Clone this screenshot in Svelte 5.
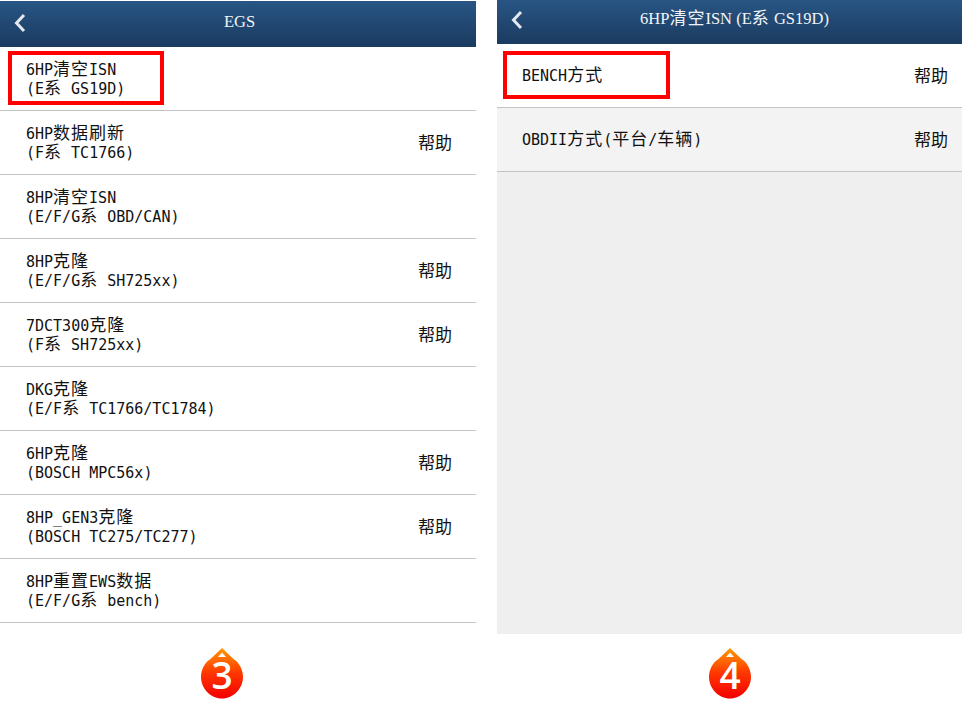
<script>
  const left = [
    { a: '6HP清空ISN', b: '(E系 GS19D)' },
    { a: '6HP数据刷新', b: '(F系 TC1766)', help: true },
    { a: '8HP清空ISN', b: '(E/F/G系 OBD/CAN)' },
    { a: '8HP克隆', b: '(E/F/G系 SH725xx)', help: true },
    { a: '7DCT300克隆', b: '(F系 SH725xx)', help: true },
    { a: 'DKG克隆', b: '(E/F系 TC1766/TC1784)' },
    { a: '6HP克隆', b: '(BOSCH MPC56x)', help: true },
    { a: '8HP_GEN3克隆', b: '(BOSCH TC275/TC277)', help: true },
    { a: '8HP重置EWS数据', b: '(E/F/G系 bench)' }
  ];
  const right = [
    { a: 'BENCH方式', help: true },
    { a: 'OBDII方式(平台/车辆)', help: true }
  ];

  // split into latin / chinese runs, the chinese ones get their own size
  const runs = (text) => text.split(/([\u4e00-\u9fff]+)/).filter(Boolean);
  const isCjk = (run) => /[\u4e00-\u9fff]/.test(run);
</script>

{#snippet mixed(text)}
  {#each runs(text) as run}{#if isCjk(run)}<span class="cjk">{run}</span>{:else}{run}{/if}{/each}
{/snippet}

{#snippet back()}
  <svg class="back" width="14" height="20" viewBox="0 0 14 20">
    <path d="M11 2 L3.5 10 L11 18" fill="none" stroke="#e4e9ee" stroke-width="3" />
  </svg>
{/snippet}

{#snippet badge(n)}
  <svg width="44" height="60" viewBox="0 0 44 60">
    <defs>
      <linearGradient id="drop{n}" x1="0" y1="0" x2="0" y2="1">
        <stop offset="0" stop-color="#ff9a00" />
        <stop offset="0.5" stop-color="#ff3600" />
        <stop offset="1" stop-color="#f40000" />
      </linearGradient>
    </defs>
    <path d="M22 1 L33.5 12 C39.5 15.5 43 23 43 30 C43 41.5 33.5 51.5 22 51.5 C10.5 51.5 1 41.5 1 30 C1 23 4.5 15.5 10.5 12 Z" fill="url(#drop{n})" />
    <path d="M22 5.5 L26 10 H18 Z" fill="#fff" />
    <text x="22" y="42" text-anchor="middle">{n}</text>
  </svg>
{/snippet}

<div class="page">
  <section class="panel first">
    <header>
      {@render back()}
      <h1>EGS</h1>
    </header>
    <ul>
      {#each left as row, i}
        <li>
          <div class="label">
            {@render mixed(row.a)}<br />{@render mixed(row.b)}
            {#if i === 0}<span class="mark"></span>{/if}
          </div>
          {#if row.help}<span class="help">帮助</span>{/if}
        </li>
      {/each}
    </ul>
    <footer>{@render badge(3)}</footer>
  </section>

  <section class="panel second">
    <header>
      {@render back()}
      <h1>{@render mixed('6HP清空ISN (E系 GS19D)')}</h1>
    </header>
    <div class="body">
      <ul>
        {#each right as row, i}
          <li class:white={i === 0}>
            <div class="label">
              {@render mixed(row.a)}
              {#if i === 0}<span class="mark"></span>{/if}
            </div>
            {#if row.help}<span class="help">帮助</span>{/if}
          </li>
        {/each}
      </ul>
    </div>
    <footer>{@render badge(4)}</footer>
  </section>
</div>

<style>
  :global(body) {
    margin: 0;
    background: #fff;
  }

  .page {
    display: flex;
    justify-content: space-between;
    width: 962px;
    height: 726px;
    overflow: hidden;
  }

  .panel {
    display: flex;
    flex-direction: column;
  }

  .first {
    width: 476px;
    padding-top: 1px;
  }

  .second {
    width: 465px;
  }

  header {
    position: relative;
    display: flex;
    align-items: center;
    justify-content: center;
    flex: none;
    box-sizing: border-box;
    background: linear-gradient(#285584, #1b3b60);
  }

  .first header {
    height: 46px;
    padding: 0 0 5px 3px;
  }

  .second header {
    height: 44px;
    padding: 0 0 7px 10px;
  }

  .back {
    position: absolute;
    left: 13px;
    top: 12px;
  }

  .second .back {
    top: 10px;
  }

  h1 {
    margin: 0;
    font: 400 16.5px "Liberation Serif", "Noto Sans CJK SC", serif;
    color: #f2f5f8;
  }

  h1 .cjk {
    letter-spacing: 1px;
  }

  ul {
    list-style: none;
    margin: 0;
    padding: 0;
  }

  li {
    box-sizing: border-box;
    display: flex;
    align-items: center;
    justify-content: space-between;
    height: 64px;
    padding: 2px 24px 0 26px;
    border-bottom: 1px solid #c4c4c4;
    font: 15px/19px "DejaVu Sans Mono", "Noto Sans CJK SC", monospace;
    color: #111;
  }

  .cjk {
    font-family: "Noto Sans CJK SC", sans-serif;
    font-size: 17px;
    line-height: 0;
    letter-spacing: 1px;
  }

  .second li {
    padding-left: 25px;
    padding-right: 14px;
    background: #f3f3f3;
  }

  .second li.white {
    background: #fff;
  }

  .label {
    position: relative;
    white-space: nowrap;
  }

  .mark {
    position: absolute;
    border: 4px solid #f00;
  }

  .first .mark {
    left: -18px;
    top: -10px;
    width: 148px;
    height: 46px;
  }

  .second .mark {
    left: -19px;
    top: -16px;
    width: 159px;
    height: 40px;
  }

  .help {
    padding-bottom: 5px;
    font: 17px "Noto Sans CJK SC", sans-serif;
  }

  .body {
    height: 590px;
    flex: none;
    background: #efefef;
  }

  footer {
    display: flex;
    justify-content: center;
  }

  .first footer {
    padding: 24px 32px 0 0;
  }

  .second footer {
    padding-top: 13px;
  }

  text {
    font: 600 37px "Open Sans", sans-serif;
    fill: #fff;
  }
</style>
